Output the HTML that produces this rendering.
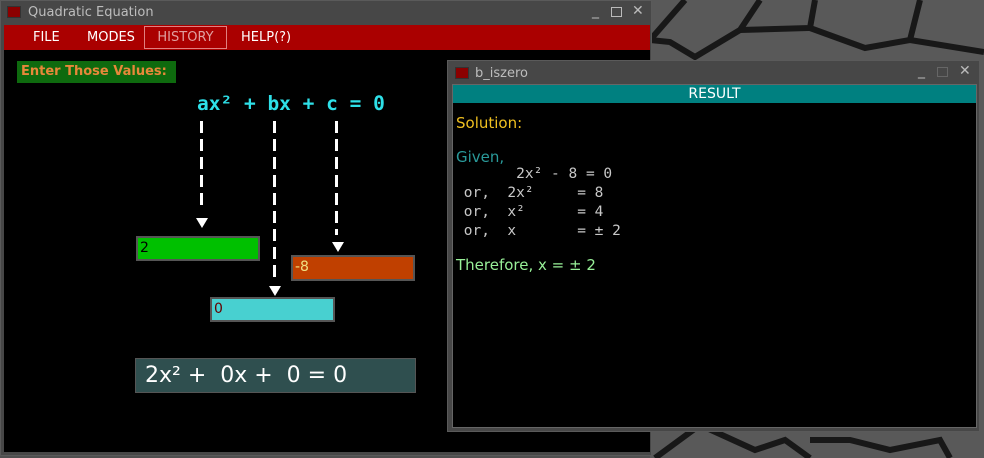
<!DOCTYPE html>
<html><head><style>
*{margin:0;padding:0;box-sizing:border-box}
body{width:984px;height:458px;overflow:hidden;background:#505050;position:relative;font-family:"DejaVu Sans","Liberation Sans",sans-serif}
.abs{position:absolute}
.t{color:#bdbdbd;font-size:13px}
.ctl{position:absolute;color:#bbb;font-size:14px}
.mono{font-family:"DejaVu Sans Mono","Liberation Mono",monospace}
.dash{position:absolute;width:3px;background:repeating-linear-gradient(#fff 0 12px,transparent 12px 18px)}
.arr{position:absolute;width:0;height:0;border-left:6px solid transparent;border-right:6px solid transparent;border-top:10px solid #fff}
.inp{position:absolute;border:2px solid #555;font-size:14px;padding-left:2px;line-height:21px}
</style></head><body>
<svg class="abs" style="left:650px;top:0" width="334" height="458">
<rect width="334" height="458" fill="#595959"/>
<g stroke="#181818" stroke-width="6" fill="none">
<path d="M0 40 L35 0"/>
<path d="M0 40 L20 42 L45 57 L90 30 L110 0"/>
<path d="M90 30 L160 28 L165 0"/>
<path d="M160 28 L215 48 L260 40 L270 0"/>
<path d="M260 40 L334 52"/>
<path d="M5 458 L50 425 L105 450 L135 440 L160 458"/>
<path d="M160 440 L200 440 L240 450 L290 440 L300 458"/>
</g></svg>
<!-- main window -->
<div class="abs" style="left:0;top:0;width:652px;height:456px;background:#474747;border:1px solid #5a5a5a"></div>
<div class="abs" style="left:7px;top:6px;width:14px;height:12px;background:#8b0000;border:1px solid #333"></div>
<div class="abs t" style="left:28px;top:5px">Quadratic Equation</div>
<div class="ctl" style="left:592px;top:3px">_</div>
<div class="abs" style="left:611px;top:7px;width:11px;height:10px;border:1.5px solid #bbb"></div>
<div class="ctl" style="left:632px;top:3px">✕</div>
<div class="abs" style="left:4px;top:25px;width:646px;height:25px;background:#aa0000"></div>
<div class="abs" style="left:33px;top:30px;color:#fff;font-size:13px">FILE</div>
<div class="abs" style="left:87px;top:30px;color:#fff;font-size:13px">MODES</div>
<div class="abs" style="left:144px;top:26px;width:83px;height:23px;border:1px solid #e08080;color:#e0a0a0;font-size:13px;text-align:center;line-height:21px">HISTORY</div>
<div class="abs" style="left:241px;top:30px;color:#fff;font-size:13px">HELP(?)</div>
<div class="abs" style="left:4px;top:50px;width:646px;height:402px;background:#000"></div>
<div class="abs" style="left:17px;top:61px;width:159px;height:22px;background:#0e6a0e;color:#e8883a;font-weight:bold;font-size:13px;line-height:22px;padding-left:4px;white-space:nowrap;overflow:hidden">Enter Those Values:</div>
<div class="abs mono" style="left:197px;top:92px;color:#2ee0e8;font-weight:bold;font-size:19.5px;white-space:pre">ax² + bx + c = 0</div>
<div class="dash" style="left:200px;top:121px;height:90px"></div>
<div class="arr" style="left:196px;top:218px"></div>
<div class="dash" style="left:273px;top:121px;height:162px"></div>
<div class="arr" style="left:269px;top:286px"></div>
<div class="dash" style="left:335px;top:121px;height:114px"></div>
<div class="arr" style="left:332px;top:242px"></div>
<div class="inp" style="left:136px;top:236px;width:124px;height:25px;background:#00c000;color:#000">2</div>
<div class="inp" style="left:291px;top:255px;width:124px;height:26px;background:#c04000;color:#f0e080">-8</div>
<div class="inp" style="left:210px;top:297px;width:125px;height:25px;background:#48d0d0;color:#600">0</div>
<div class="abs" style="left:135px;top:358px;width:281px;height:35px;background:#2f4f4f;border:1px solid #555;color:#fff;font-size:22px;line-height:33px;padding-left:9px;white-space:pre">2x² +  0x +  0 = 0</div>
<!-- result window -->
<div class="abs" style="left:447px;top:60px;width:533px;height:372px;background:#474747;border:1px solid #5a5a5a"></div>
<div class="abs" style="left:455px;top:67px;width:14px;height:12px;background:#8b0000;border:1px solid #333"></div>
<div class="abs t" style="left:475px;top:66px">b_iszero</div>
<div class="ctl" style="left:918px;top:63px">_</div>
<div class="abs" style="left:937px;top:67px;width:11px;height:10px;border:1.5px solid #666"></div>
<div class="ctl" style="left:959px;top:63px">✕</div>
<div class="abs" style="left:452px;top:84px;width:525px;height:344px;background:#000;border:1px solid #666"></div>
<div class="abs" style="left:453px;top:85px;width:523px;height:18px;background:#008080;color:#fff;font-size:14px;text-align:center;line-height:18px">RESULT</div>
<div class="abs" style="left:456px;top:114px;color:#f0c020;font-size:15px">Solution:</div>
<div class="abs" style="left:456px;top:148px;color:#2a9a9a;font-size:15px">Given,</div>
<div class="abs mono" style="left:455px;top:165px;color:#c8c8c8;font-size:14.5px;line-height:19px;white-space:pre">       2x² - 8 = 0
 or,  2x²     = 8
 or,  x²      = 4
 or,  x       = ± 2</div>
<div class="abs" style="left:456px;top:256px;color:#98f098;font-size:15px">Therefore, x = ± 2</div>
</body></html>
